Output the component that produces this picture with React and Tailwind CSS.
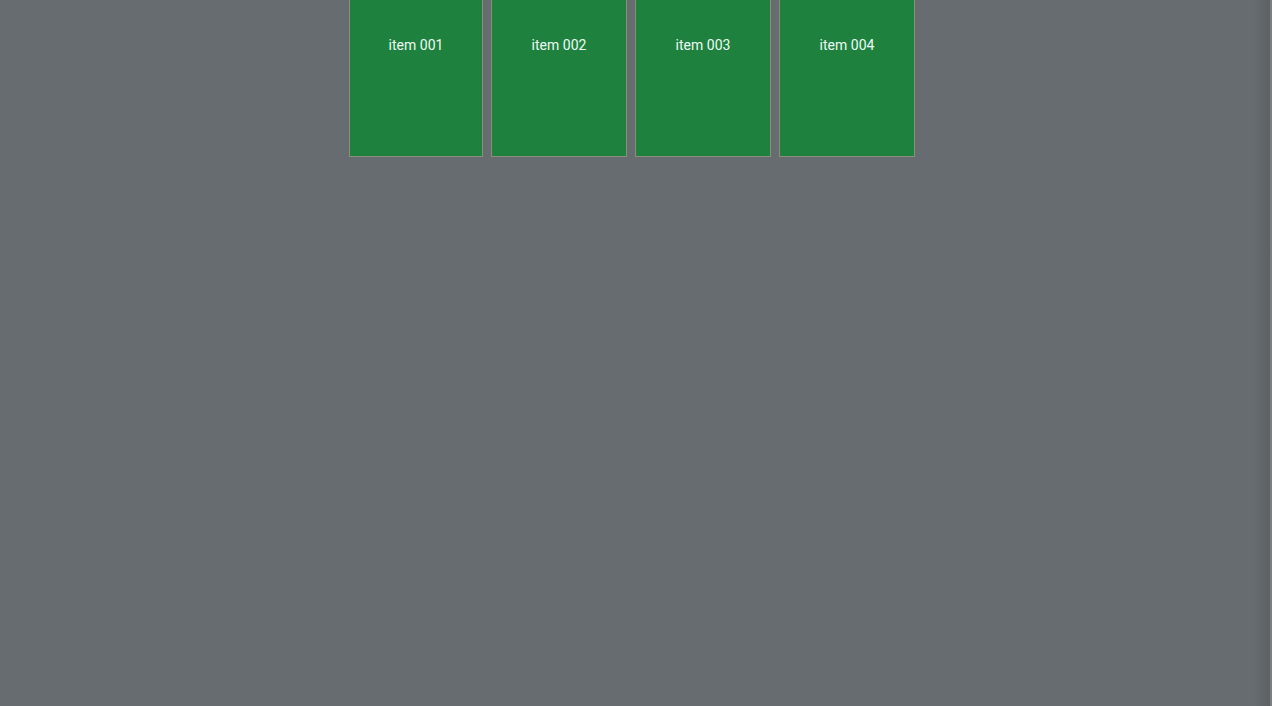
import React from "react";

const items = [
  { id: 1, label: "item 001", width: "w-[134px]" },
  { id: 2, label: "item 002", width: "w-[136px]" },
  { id: 3, label: "item 003", width: "w-[136px]" },
  { id: 4, label: "item 004", width: "w-[136px]" },
];

function Card({ label, width }) {
  return (
    <div
      className={`${width} h-[157px] shrink-0 bg-[#1e823e] border-x border-b border-[#8e8c7c] pt-[35px] text-center text-sm leading-5 text-[#eefaf4]`}
    >
      {label}
    </div>
  );
}

export default function App() {
  return (
    <div
      className="flex h-[706px] w-full bg-[#666c6f]"
      style={{ fontFamily: "Roboto, 'Liberation Sans', sans-serif" }}
    >
      <div className="flex-1">
        <div className="flex gap-2 pl-[349px]">
          {items.map((item) => (
            <Card key={item.id} label={item.label} width={item.width} />
          ))}
        </div>
      </div>
      <div className="w-[16px] bg-gradient-to-r from-[#666c6f] to-[#5c6164]" />
      <div className="w-[2px] bg-[#7b7f81]" />
    </div>
  );
}
